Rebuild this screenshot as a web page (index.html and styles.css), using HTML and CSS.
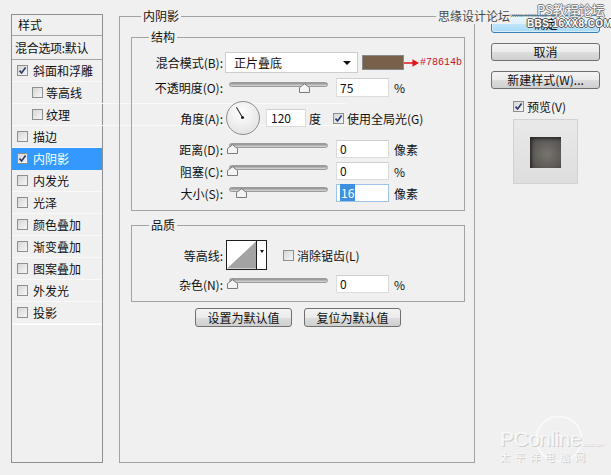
FILE: index.html
```html
<!DOCTYPE html>
<html lang="zh-CN">
<head>
<meta charset="utf-8">
<title>图层样式</title>
<link rel="stylesheet" href="styles.css">
</head>
<body>
<div class="dialog">
  <div class="styles-list">
    <div class="list-head">样式</div>
    <div class="list-blend">混合选项:默认</div>
    <div class="list-row"><span class="cb"><svg viewBox="0 0 9 9"><path d="M1.5 4.6 L3.6 7 L7.6 1.6"/></svg></span>斜面和浮雕</div>
    <div class="list-row sub"><span class="cb"></span>等高线</div>
    <div class="list-row sub"><span class="cb"></span>纹理</div>
    <div class="list-row"><span class="cb"></span>描边</div>
    <div class="list-row selected"><span class="cb"><svg viewBox="0 0 9 9"><path d="M1.5 4.6 L3.6 7 L7.6 1.6"/></svg></span>内阴影</div>
    <div class="list-row"><span class="cb"></span>内发光</div>
    <div class="list-row"><span class="cb"></span>光泽</div>
    <div class="list-row"><span class="cb"></span>颜色叠加</div>
    <div class="list-row"><span class="cb"></span>渐变叠加</div>
    <div class="list-row"><span class="cb"></span>图案叠加</div>
    <div class="list-row"><span class="cb"></span>外发光</div>
    <div class="list-row"><span class="cb"></span>投影</div>
    <div class="list-rest"></div>
  </div>

  <fieldset class="group main">
    <legend>内阴影</legend>
    <fieldset class="group sub structure">
      <legend>结构</legend>
      <div class="row blend">
        <span class="lbl">混合模式(B):</span>
        <div class="select"><span>正片叠底</span><span class="caret"></span></div>
        <span class="swatch"></span>
        <svg class="red-arrow" viewBox="0 0 16 10"><line x1="0" y1="5" x2="10" y2="5"/><polygon points="9,1 16,5 9,9"/></svg>
        <span class="hex">#78614b</span>
      </div>
      <div class="row opacity">
        <span class="lbl">不透明度(O):</span>
        <div class="slider"><span class="track"></span><svg class="thumb" style="left:75px" viewBox="0 0 11 10"><path d="M0.5 9.5 V4.5 L5.5 0.8 L10.5 4.5 V9.5 Z"/></svg></div>
        <span class="field tall">75</span>
        <span class="unit">%</span>
      </div>
      <div class="row angle">
        <span class="lbl">角度(A):</span>
        <div class="dial"><svg viewBox="0 0 34 34"><line x1="16.5" y1="16.5" x2="10" y2="5.5"/><circle cx="16.5" cy="16.5" r="1.6"/></svg></div>
        <span class="field short">120</span>
        <span class="deg">度</span>
        <span class="cb global"><svg viewBox="0 0 9 9"><path d="M1.5 4.6 L3.6 7 L7.6 1.6"/></svg></span>
        <span class="cb-text">使用全局光(G)</span>
      </div>
      <div class="row first-px">
        <span class="lbl">距离(D):</span>
        <div class="slider"><span class="track"></span><svg class="thumb" style="left:3px" viewBox="0 0 11 10"><path d="M0.5 9.5 V4.5 L5.5 0.8 L10.5 4.5 V9.5 Z"/></svg></div>
        <span class="field">0</span>
        <span class="unit">像素</span>
      </div>
      <div class="row">
        <span class="lbl">阻塞(C):</span>
        <div class="slider"><span class="track"></span><svg class="thumb" style="left:3px" viewBox="0 0 11 10"><path d="M0.5 9.5 V4.5 L5.5 0.8 L10.5 4.5 V9.5 Z"/></svg></div>
        <span class="field">0</span>
        <span class="unit">%</span>
      </div>
      <div class="row">
        <span class="lbl">大小(S):</span>
        <div class="slider"><span class="track"></span><svg class="thumb" style="left:12px" viewBox="0 0 11 10"><path d="M0.5 9.5 V4.5 L5.5 0.8 L10.5 4.5 V9.5 Z"/></svg></div>
        <span class="field focused"><span class="sel">16</span></span>
        <span class="unit">像素</span>
      </div>
    </fieldset>

    <fieldset class="group sub quality">
      <legend>品质</legend>
      <div class="row contour">
        <span class="lbl">等高线:</span>
        <div class="contour-box">
          <svg class="curve" viewBox="0 0 30 28"><polygon points="0,28 30,0 30,28"/></svg>
          <span class="contour-drop"><span class="caret small"></span></span>
        </div>
        <span class="cb anti"></span>
        <span class="cb-text">消除锯齿(L)</span>
      </div>
      <div class="row noise">
        <span class="lbl">杂色(N):</span>
        <div class="slider"><span class="track"></span><svg class="thumb" style="left:3px" viewBox="0 0 11 10"><path d="M0.5 9.5 V4.5 L5.5 0.8 L10.5 4.5 V9.5 Z"/></svg></div>
        <span class="field">0</span>
        <span class="unit">%</span>
      </div>
    </fieldset>

    <div class="defaults">
      <span class="btn wide">设置为默认值</span>
      <span class="btn wide">复位为默认值</span>
    </div>
  </fieldset>

  <div class="side">
    <span class="btn ok">确定</span>
    <span class="btn cancel">取消</span>
    <span class="btn new">新建样式(W)...</span>
    <div class="preview-toggle"><span class="cb"><svg viewBox="0 0 9 9"><path d="M1.5 4.6 L3.6 7 L7.6 1.6"/></svg></span><span>预览(V)</span></div>
    <div class="preview-box"><span class="preview-square"></span></div>
  </div>

  <div class="wm-sy">思缘设计论坛</div>
  <div class="wm-url">www.missyuan.com</div>
  <div class="wm-ps">PS教程论坛</div>
  <div class="wm-bbs">BBS.16XX8.COM</div>
  <div class="wm-pc">
    <svg class="wm-ring" viewBox="0 0 60 60"><circle cx="30" cy="30" r="27"/></svg>
    <div class="wm-pc-name">PConline<span class="wm-pc-dom">.com.cn</span></div>
    <div class="wm-pc-cn">太平洋电脑网</div>
  </div>
</div>
</body>
</html>
```

FILE: styles.css
```css
* { box-sizing: border-box; }

body {
  margin: 0;
  background: #f0f0f0;
  font-family: "Noto Sans CJK SC", "Noto Sans", sans-serif;
  font-size: 12px;
  color: #111;
}

.dialog {
  position: relative;
  width: 611px;
  height: 475px;
  display: flex;
  align-items: flex-start;
  padding-left: 11px;
  overflow: hidden;
}

/* ---------- left list ---------- */
.styles-list {
  margin-top: 14px;
  width: 92px;
  height: 449px;
  border: 1px solid #8f8f8f;
  display: flex;
  flex-direction: column;
  flex: none;
}
.list-head {
  height: 21px;
  line-height: 20px;
  padding-left: 6px;
  border-bottom: 1px solid #a4a4a4;
}
.list-blend {
  height: 24px;
  line-height: 23px;
  padding-left: 3px;
  border-bottom: 1px solid #a4a4a4;
  white-space: nowrap;
  letter-spacing: -0.3px;
}
.list-row {
  height: 22px;
  display: flex;
  align-items: center;
  gap: 5px;
  padding-left: 5px;
  border-bottom: 1px solid #f9f9f9;
}
.list-row.sub { padding-left: 20px; gap: 3px; }
.list-row.selected { background: #3399ff; color: #fff; border-bottom-color: #3399ff; }
.list-rest { flex: 1; border-top: 1px solid #ffffff; }

/* ---------- checkbox ---------- */
.cb {
  width: 11px;
  height: 11px;
  flex: none;
  border: 1px solid #8e8f8f;
  background: linear-gradient(135deg, #d6d6d6, #f7f7f7);
  display: inline-flex;
  align-items: center;
  justify-content: center;
}
.cb svg { width: 9px; height: 9px; }
.cb svg path { fill: none; stroke: #2c3d70; stroke-width: 1.7; }
.cb-text { margin-left: 3px; white-space: nowrap; }

/* ---------- fieldsets ---------- */
.group {
  margin: 0;
  padding: 0;
  min-width: 0;
  border: 1px solid #a3a3a3;
}
.group > legend {
  padding: 0 2px;
  height: 16px;
  line-height: 16px;
}
.main {
  margin: 8px 0 0 16px;
  width: 356px;
  height: 455px;
  padding: 0 9px 0 11px;
  flex: none;
}
.main > legend { margin-left: 10px; }
.sub { width: 334px; }
.sub > legend { margin-left: 17px; }
.structure { margin-top: 5px; height: 182px; }
.quality { margin-top: 6px; height: 85px; }

.row {
  display: flex;
  align-items: center;
  height: 18px;
  margin-top: 4px;
}
.lbl {
  width: 91px;
  flex: none;
  text-align: right;
  white-space: nowrap;
}
.row.blend { height: 21px; margin-top: 7px; }
.row.opacity { height: 19px; margin-top: 5px; }
.row.angle { height: 34px; margin-top: 4px; }
.row.first-px { margin-top: 5px; }
.row.contour { height: 30px; margin-top: 7px; }
.row.noise { margin-top: 5px; }

/* select */
.select {
  margin-left: 2px;
  width: 133px;
  height: 21px;
  background: #fff;
  border: 1px solid #cdcdcd;
  display: flex;
  align-items: center;
  padding-left: 8px;
  flex: none;
}
.caret {
  margin-left: auto;
  margin-right: 6px;
  width: 0;
  height: 0;
  border-left: 4px solid transparent;
  border-right: 4px solid transparent;
  border-top: 4px solid #111;
}
.caret.small {
  margin: 0;
  border-left-width: 2.5px;
  border-right-width: 2.5px;
  border-top-width: 3px;
}
.swatch {
  margin-left: 4px;
  width: 42px;
  height: 15px;
  background: #78614b;
  border: 1px solid #8a8a8a;
  flex: none;
}
.red-arrow { width: 15px; height: 10px; flex: none; }
.red-arrow line { stroke: #e0141c; stroke-width: 1.6; }
.red-arrow polygon { fill: #e0141c; }
.hex {
  font-family: "Liberation Mono", "DejaVu Sans Mono", monospace;
  font-size: 10px;
  color: #c8141e;
  margin-left: 1px;
}

/* slider */
.slider {
  position: relative;
  width: 99px;
  height: 18px;
  margin-left: 6px;
  flex: none;
}
.track {
  position: absolute;
  left: 0;
  right: 0;
  top: 3px;
  height: 5px;
  border-radius: 3px;
  border: 1px solid #9b9b9b;
  background: linear-gradient(#8e8e8e, #c4c4c4 70%, #d8d8d8);
}
.thumb {
  position: absolute;
  top: 4px;
  width: 11px;
  height: 10px;
  margin-left: -5px;
}
.thumb path { fill: #f4f4f4; stroke: #7b7b7b; stroke-width: 1; }

/* input */
.field {
  margin-left: 8px;
  width: 53px;
  height: 18px;
  line-height: 16px;
  padding-left: 3px;
  background: #fff;
  border: 1px solid #dcdcdc;
  border-top-color: #cfcfcf;
  flex: none;
}
.field.tall { height: 19px; line-height: 17px; }
.field.short { margin-left: 6px; width: 40px; padding-left: 4px; }
.field.focused { border-color: #9fc3e8; }
.sel { background: #3d8fe0; color: #fff; padding: 0 1px; }
.unit { margin-left: 5px; }
.deg { margin-left: 3px; }
.cb.global { margin-left: 12px; }

/* dial */
.dial {
  margin-left: 3px;
  width: 34px;
  height: 34px;
  border-radius: 50%;
  border: 1px solid #8d8d8d;
  background: radial-gradient(circle at 45% 35%, #ffffff, #e4e4e4 75%, #d6d6d6);
  flex: none;
}
.dial svg { width: 32px; height: 32px; display: block; }
.dial line { stroke: #333; stroke-width: 1.2; }
.dial circle { fill: #222; }

/* contour */
.contour-box {
  margin-left: 3px;
  width: 41px;
  height: 30px;
  border: 1px solid #1e1e1e;
  background: #fff;
  display: flex;
  flex: none;
}
.curve { width: 29px; height: 28px; flex: none; }
.curve polygon { fill: #a3a3a3; }
.contour-drop {
  flex: 1;
  border-left: 1px solid #1e1e1e;
  display: flex;
  justify-content: center;
  padding-top: 9px;
}
.cb.anti { margin-left: 16px; }

/* buttons */
.btn {
  display: flex;
  align-items: center;
  justify-content: center;
  height: 18px;
  border: 1px solid #707070;
  border-radius: 3px;
  background: linear-gradient(#f3f3f3, #ebebeb 50%, #dddddd 51%, #cfcfcf);
  white-space: nowrap;
  line-height: 1;
  flex: none;
}
.defaults {
  display: flex;
  justify-content: center;
  gap: 12px;
  margin-top: 6px;
}
.btn.wide { width: 97px; height: 19px; }

/* side column */
.side {
  margin-left: 16px;
  width: 109px;
  display: flex;
  flex-direction: column;
  flex: none;
}
.btn.ok {
  margin-top: 15px;
  border-color: #3c7fb1;
  background: linear-gradient(#eaf6fd, #d9f0fc 50%, #bee6fd 51%, #a7d9f5);
  box-shadow: inset 0 0 0 1px #d4edfb;
}
.btn.cancel { margin-top: 10px; }
.btn.new { margin-top: 10px; }
.preview-toggle {
  margin-top: 11px;
  height: 12px;
  padding-left: 22px;
  display: flex;
  align-items: center;
  gap: 3px;
}
.preview-box {
  margin-top: 7px;
  margin-left: 22px;
  width: 65px;
  height: 65px;
  border: 1px solid #d2d2d2;
  background: linear-gradient(#e9e9e9, #dedede);
  padding: 17px 0 0 16px;
}
.preview-square {
  display: block;
  width: 31px;
  height: 31px;
  background: radial-gradient(circle at 55% 55%, #78746f, #5d5956 60%, #46423f);
  box-shadow: inset 2px 2px 3px rgba(0,0,0,0.45);
}

/* watermarks */
.wm-sy {
  position: absolute;
  left: 436px;
  top: 8px;
  padding: 0 2px;
  background: #f0f0f0;
  color: #4a4a4a;
  font-size: 12px;
  line-height: 16px;
}
.wm-url {
  position: absolute;
  left: 510px;
  top: 12px;
  font-family: "Liberation Sans", sans-serif;
  font-size: 6px;
  color: #777;
}
.wm-ps {
  position: absolute;
  left: 537px;
  top: 2px;
  font-size: 13px;
  line-height: 15px;
  color: #fbfbfb;
  text-shadow: 1px 0 #7d7d7d, -1px 0 #7d7d7d, 0 1px #7d7d7d, 0 -1px #7d7d7d;
}
.wm-bbs {
  position: absolute;
  left: 527px;
  top: 18px;
  font-family: "Liberation Sans", sans-serif;
  font-weight: bold;
  font-size: 10px;
  line-height: 12px;
  letter-spacing: 0.4px;
  color: #fdfdfd;
  text-shadow: 1px 0 #555, -1px 0 #555, 0 1px #555, 0 -1px #555;
}
.wm-pc {
  position: absolute;
  left: 498px;
  top: 414px;
  width: 110px;
  height: 56px;
}
.wm-ring {
  position: absolute;
  left: 36px;
  top: 0;
  width: 50px;
  height: 50px;
}
.wm-ring circle { fill: none; stroke: #f9f9f9; stroke-width: 2.5; }
.wm-pc-name {
  position: absolute;
  left: 2px;
  top: 14px;
  font-family: "Liberation Sans", sans-serif;
  font-size: 21px;
  line-height: 22px;
  letter-spacing: -0.5px;
  color: #f8f8f8;
  text-shadow: 1px 1px 0 #cdcdcd;
}
.wm-pc-dom { font-size: 6px; letter-spacing: 0; }
.wm-pc-cn {
  position: absolute;
  left: 2px;
  top: 37px;
  font-size: 10px;
  line-height: 12px;
  letter-spacing: 5px;
  color: #f8f8f8;
  text-shadow: 1px 1px 0 #cccccc;
}
```
